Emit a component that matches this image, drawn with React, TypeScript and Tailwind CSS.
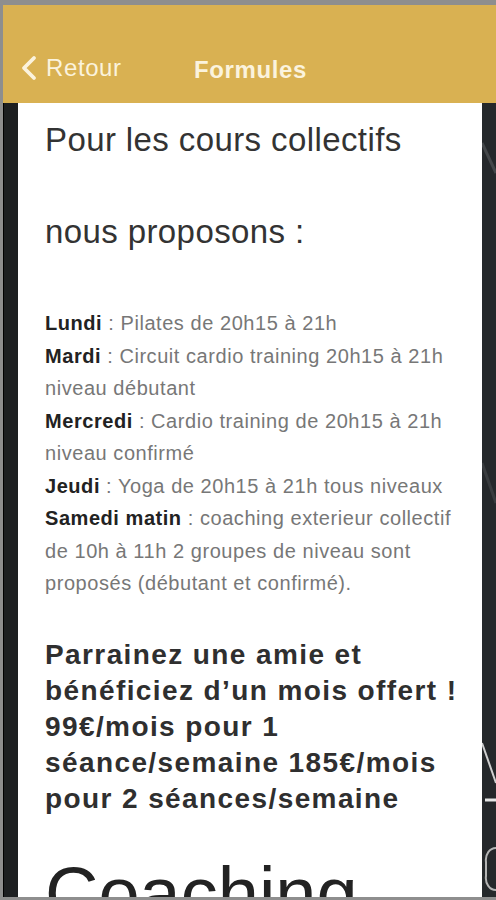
import { ChevronLeft } from 'lucide-react';

const schedule = [
  { day: 'Lundi', lines: ['Pilates de 20h15 à 21h'] },
  { day: 'Mardi', lines: ['Circuit cardio training 20h15 à 21h', 'niveau débutant'] },
  { day: 'Mercredi', lines: ['Cardio training de 20h15 à 21h', 'niveau confirmé'] },
  { day: 'Jeudi', lines: ['Yoga de 20h15 à 21h tous niveaux'] },
  { day: 'Samedi matin', lines: ['coaching exterieur collectif', 'de 10h à 11h 2 groupes de niveau sont', 'proposés (débutant et confirmé).'] },
];

const offer = [
  'Parrainez une amie et',
  'bénéficiez d’un mois offert !',
  '99€/mois pour 1',
  'séance/semaine 185€/mois',
  'pour 2 séances/semaine',
];

export default function App() {
  return (
    <div className="w-[496px] h-[900px] bg-[#8e8e8e] pt-[5px] pl-[3px] pb-[3px] flex flex-col overflow-hidden font-['Liberation_Sans',Arial,sans-serif]">
      <header className="h-[98px] shrink-0 bg-[#d9b152] flex items-end pb-[15px] text-[#fbf3dd] text-[24px] tracking-[0.6px]">
        <div className="flex items-center w-[191px] pl-[6px]">
          <ChevronLeft size={40} strokeWidth={2.3} />
          <span className="ml-[-3px]">Retour</span>
        </div>
        <span className="font-bold">Formules</span>
      </header>

      <div className="flex flex-1 min-h-0">
        <div className="w-[15px] bg-[#1d1f21] border-l border-black" />
        <main className="flex-1 bg-white pl-[27px] pr-[6px] pt-[17px] text-[#333] overflow-hidden whitespace-nowrap">
          <h1 className="text-[33px] leading-[40px] font-light tracking-[0.4px]">Pour les cours collectifs</h1>
          <p className="text-[33px] leading-[40px] font-light tracking-[0.4px] mt-[52px]">nous proposons :</p>

          <ul className="mt-[55px] text-[20px] leading-[32.5px] tracking-[0.55px]">
            {schedule.map(({ day, lines }) => (
              <li key={day}>
                <b className="text-[#222]">{day}</b>
                <span className="text-[#777]">
                  {' : '}
                  {lines.map((l, i) => (
                    <span key={i}>
                      {i > 0 && <br />}
                      {l}
                    </span>
                  ))}
                </span>
              </li>
            ))}
          </ul>

          <p className="mt-[37px] text-[28px] leading-[36px] font-bold tracking-[1.4px] text-[#2f2f2f]">
            {offer.map((l, i) => (
              <span key={i}>
                {i > 0 && <br />}
                {l}
              </span>
            ))}
          </p>

          <h2 className="mt-[37px] text-[74px] leading-[80px] font-light text-[#222]">Coaching</h2>
        </main>
        <div className="w-[14px] bg-[#25282b] relative overflow-hidden">
          <svg width="14" height="792" className="absolute inset-0">
            <path d="M0 40 L14 70" stroke="#44474a" strokeWidth="3" />
            <path d="M0 360 L14 400" stroke="#393c3f" strokeWidth="3" />
            <path d="M0 640 L14 680" stroke="#d0d0d0" strokeWidth="2" />
            <path d="M3 697 H14" stroke="#e6e6e6" strokeWidth="3" />
            <path d="M14 745 A10 12 0 0 0 4 759 V773 A10 12 0 0 0 14 787" stroke="#b5b5b5" strokeWidth="2" fill="none" />
          </svg>
        </div>
      </div>
    </div>
  );
}
